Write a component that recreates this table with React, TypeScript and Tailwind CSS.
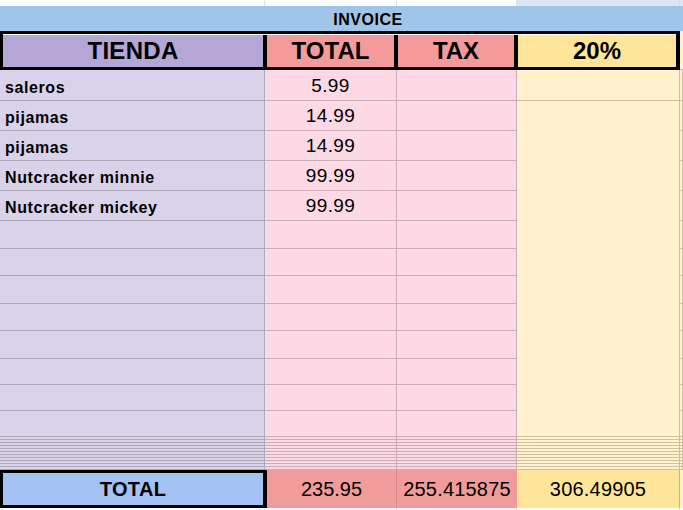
const items = [
  { name: 'saleros', total: '5.99' },
  { name: 'pijamas', total: '14.99' },
  { name: 'pijamas', total: '14.99' },
  { name: 'Nutcracker minnie', total: '99.99' },
  { name: 'Nutcracker mickey', total: '99.99' }
];

const emptyRows = Array.from({ length: 8 });
const hiddenRows = Array.from({ length: 11 });

const line = 'border-b border-r border-black/20';

export default function App() {
  return (
    <div className="h-[510px] w-[683px] overflow-hidden bg-white font-['Liberation_Sans',Arial,sans-serif] text-black">
      {/* partial row above */}
      <div className="grid h-[6px] grid-cols-[265px_132px_120px_163px_1fr]">
        <div className="border-r border-[#e2e2e2]" />
        <div className="border-r border-[#e2e2e2]" />
        <div className="border-r border-[#e2e2e2]" />
        <div className="border-r border-[#cfd9ef] bg-[#dde6f8]" />
        <div className="bg-[#dde6f8]" />
      </div>

      {/* invoice title, merged across */}
      <div className="h-[25px] bg-[#9fc5e8]">
        <div className="flex h-full w-[736px] items-center justify-center pt-[2px] text-[16px] font-bold tracking-[0.5px]">
          INVOICE
        </div>
      </div>

      {/* header */}
      <div className="flex h-[39px]">
        <div className="flex w-[680px] border-[3px] border-r-[4px] border-black pt-[1px] text-[24px] font-bold">
          <div className="flex w-[264px] items-center justify-center border-r-[4px] border-black bg-[#b4a7d6] tracking-[0.3px]">
            TIENDA
          </div>
          <div className="flex w-[131px] items-center justify-center border-r-[4px] border-black bg-[#f59a9a]">
            TOTAL
          </div>
          <div className="flex w-[120px] items-center justify-center border-r-[4px] border-black bg-[#f59a9a]">
            TAX
          </div>
          <div className="flex flex-1 items-center justify-center bg-[#ffe599]">20%</div>
        </div>
        <div className="flex-1 border-b border-black/20 bg-[#fff2cc]" />
      </div>

      {/* body */}
      <div className="grid grid-cols-[265px_132px_120px_163px_1fr] grid-rows-[31px_repeat(4,30px)_28px_27px_28px_27px_28px_26px_26px_26px_repeat(11,3px)]">
        {items.map((item, i) => (
          <>
            <div
              key={`a${i}`}
              className={`flex items-end bg-[#d9d2e9] px-[5px] pb-0 text-[16px] font-bold tracking-[0.6px] ${line}`}
            >
              {item.name}
            </div>
            <div
              key={`b${i}`}
              className={`flex items-end justify-center bg-[#fdd9e6] pb-0 text-[19px] tracking-[0.4px] ${line}`}
            >
              {item.total}
            </div>
            <div key={`c${i}`} className={`bg-[#fdd9e6] ${line}`} />
            {i === 0 && <div key="d0" className={`bg-[#fff2cc] ${line}`} />}
            {i === 1 && <div key="dm" className="row-span-12 border-b border-r border-black/20 bg-[#fff2cc]" />}
            <div key={`e${i}`} className={`bg-[#fff2cc] ${line}`} />
          </>
        ))}
        {emptyRows.map((_, i) => (
          <>
            <div key={`ea${i}`} className={`bg-[#d9d2e9] ${line}`} />
            <div key={`eb${i}`} className={`bg-[#fdd9e6] ${line}`} />
            <div key={`ec${i}`} className={`bg-[#fdd9e6] ${line}`} />
            <div key={`ee${i}`} className={`bg-[#fff2cc] ${line}`} />
          </>
        ))}
        {hiddenRows.map((_, i) => (
          <>
            <div key={`ha${i}`} className={`bg-[#d9d2e9] ${line}`} />
            <div key={`hb${i}`} className={`bg-[#fdd9e6] ${line}`} />
            <div key={`hc${i}`} className={`bg-[#fdd9e6] ${line}`} />
            <div key={`hd${i}`} className={`bg-[#fff2cc] ${line}`} />
            <div key={`he${i}`} className={`bg-[#fff2cc] ${line}`} />
          </>
        ))}
      </div>

      {/* totals */}
      <div className="flex h-[38px] text-[20px]">
        <div className="flex w-[267px] items-center justify-center border-[3px] border-r-[4px] border-black bg-[#a4c2f4] font-bold tracking-[0.3px]">
          TOTAL
        </div>
        <div className="flex w-[130px] items-center justify-center border-r border-black/10 bg-[#f29b9b]">
          235.95
        </div>
        <div className="flex w-[120px] items-center justify-center bg-[#f29b9b] tracking-[0.2px]">
          255.415875
        </div>
        <div className="flex w-[163px] items-center justify-center border-r border-black/20 bg-[#ffe599] tracking-[0.2px]">
          306.49905
        </div>
        <div className="flex-1 bg-[#fff2cc]" />
      </div>

      {/* below */}
      <div className="grid h-[10px] grid-cols-[265px_132px_120px_163px_1fr]">
        <div className="border-r border-[#e2e2e2]" />
        <div className="border-r border-[#e2e2e2]" />
        <div className="border-r border-[#e2e2e2]" />
        <div className="border-r border-[#e2e2e2]" />
        <div />
      </div>
    </div>
  );
}
